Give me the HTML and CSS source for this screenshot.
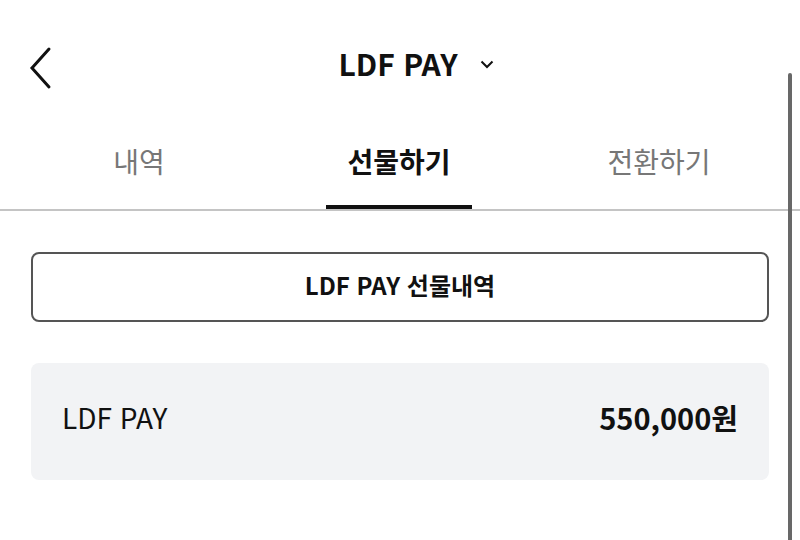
FILE: index.html
```html
<!DOCTYPE html>
<html lang="ko">
<head>
<meta charset="utf-8">
<link rel="stylesheet" href="styles.css">
</head>
<body>
<div class="page">
  <header class="header">
    <button class="back" aria-label="뒤로">
      <svg width="24" height="44" viewBox="0 0 24 44"><path d="M20 3 L3 22 L20 41" fill="none" stroke="#111" stroke-width="3" stroke-linecap="round" stroke-linejoin="miter"/></svg>
    </button>
    <div class="title">
      <span>LDF PAY</span>
      <svg class="caret" width="14" height="9" viewBox="0 0 14 9"><path d="M1.5 1.5 L7 7 L12.5 1.5" fill="none" stroke="#111" stroke-width="2"/></svg>
    </div>
  </header>
  <nav class="tabs">
    <div class="tab"><span class="tab-label">내역</span></div>
    <div class="tab active"><span class="tab-label">선물하기</span><span class="bar"></span></div>
    <div class="tab"><span class="tab-label">전환하기</span></div>
  </nav>
  <main class="content">
    <button class="outline-btn">LDF PAY 선물내역</button>
    <div class="card">
      <span class="card-name">LDF PAY</span>
      <span class="card-amount">550,000원</span>
    </div>
  </main>
  <div class="scrollbar"></div>
</div>
</body>
</html>
```
FILE: styles.css
```css
* { box-sizing: border-box; }
html, body { margin: 0; padding: 0; background: #fff; }
body {
  font-family: "Noto Sans CJK KR", "Noto Sans", sans-serif;
  color: #111;
}
.page {
  position: relative;
  width: 800px;
  height: 540px;
  overflow: hidden;
}
.header {
  position: relative;
  height: 130px;
  display: flex;
  align-items: center;
  justify-content: center;
  padding-bottom: 4px;
}
.back {
  position: absolute;
  left: 29px;
  top: 46px;
  padding: 0;
  border: 0;
  background: none;
  display: flex;
}
.title {
  display: flex;
  align-items: center;
  gap: 22px;
  margin-left: 32px;
  font-size: 30px;
  font-weight: 700;
  letter-spacing: 0;
  line-height: 1;
}
.caret { margin-top: 2px; }
.tabs {
  display: grid;
  grid-template-columns: repeat(3, 1fr);
  padding: 0 11px 0 9px;
  height: 81px;
  border-bottom: 2px solid #c4c4c4;
}
.tab {
  display: flex;
  flex-direction: column;
  align-items: center;
  padding-top: 13px;
}
.tab-label {
  font-size: 28px;
  line-height: 36px;
  color: #777;
  font-weight: 400;
}
.tab.active .tab-label {
  color: #111;
  font-weight: 700;
}
.bar {
  margin-top: auto;
  width: 146px;
  height: 4px;
  background: #111;
}
.content {
  padding: 41px 31px 0;
  display: flex;
  flex-direction: column;
  gap: 41px;
}
.outline-btn {
  height: 70px;
  width: 100%;
  border: 2px solid #555;
  border-radius: 8px;
  background: #fff;
  font-family: inherit;
  font-size: 24px;
  font-weight: 700;
  color: #111;
  padding: 0 0 5px;
}
.card {
  height: 117px;
  background: #f2f3f5;
  border-radius: 8px;
  display: flex;
  align-items: center;
  justify-content: space-between;
  padding: 0 31px 9px;
}
.card-name {
  font-size: 28px;
  font-weight: 400;
}
.card-amount {
  font-size: 29px;
  font-weight: 700;
}
.scrollbar {
  position: absolute;
  left: 788px;
  top: 73px;
  width: 4px;
  height: 480px;
  border-radius: 2px;
  background: #686868;
}
```
